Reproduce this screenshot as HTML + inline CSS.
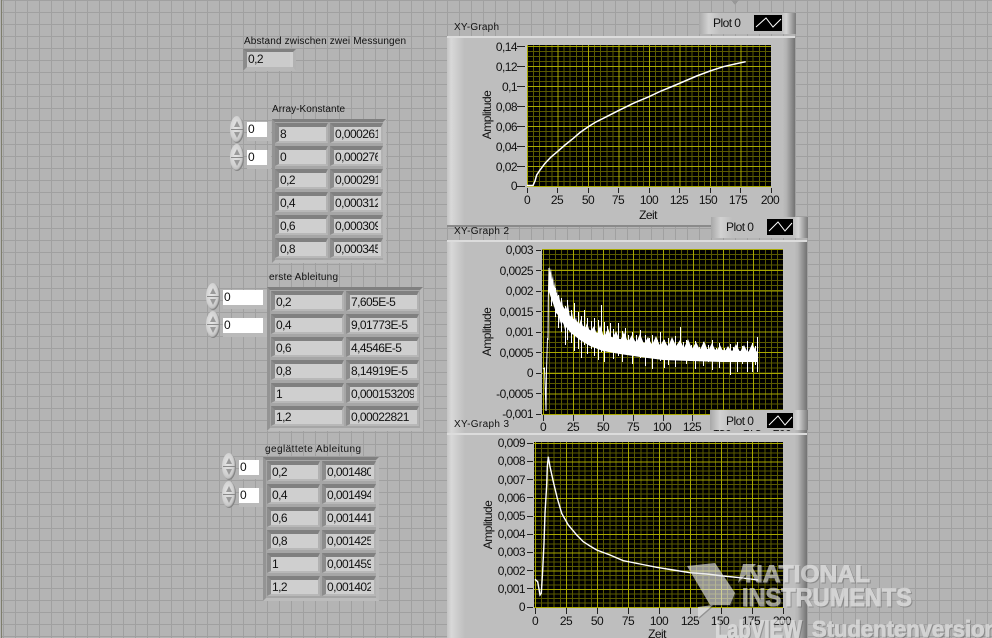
<!DOCTYPE html>
<html><head><meta charset="utf-8"><style>
html,body{margin:0;padding:0;width:992px;height:638px;overflow:hidden;background:#b4b4b4}
body{position:relative;font-family:"Liberation Sans",sans-serif;color:#111}
#bg{position:absolute;left:0;top:0}
.fr{position:absolute;box-sizing:border-box;background:#a6a6a6;border-style:solid;border-width:3px;border-color:#7f7f7f #b8b8b8 #bcbcbc #949494;display:grid;row-gap:3px;column-gap:2px;padding-top:1px;align-content:start}
.c{position:relative;box-sizing:border-box;height:20px;background:#cfcfcf;border-style:solid;border-width:4px 2px 2px 4px;border-color:#808080 #b2b2b2 #b8b8b8 #8c8c8c;font-size:12px;letter-spacing:-.55px;line-height:14px;white-space:nowrap;overflow:hidden;padding-left:1px}
.c:after{content:"";position:absolute;right:0;top:0;bottom:0;width:3px;background:#cfcfcf}
.w{position:absolute;height:15px;background:#fff;font-size:12px;line-height:15px;padding-left:1px;box-sizing:border-box;box-shadow:2px 2px 0 2px #bababa}
.s{position:absolute;width:14px;height:27px;border-radius:50%;background:radial-gradient(ellipse at 40% 40%,#e6e6e6 0,#d0d0d0 50%,#969696 100%);box-shadow:inset -1px -1px 1px #808080}
.s:before{content:"";position:absolute;left:1px;right:1px;top:13px;height:1px;background:#8a8a8a}
.s i{position:absolute;left:4px;width:0;height:0;border-left:3px solid transparent;border-right:3px solid transparent}
.s i.u{top:5px;border-bottom:6px solid #9a9a9a}
.s i.d{bottom:5px;border-top:6px solid #9a9a9a}
svg{position:absolute;left:0;top:0}
svg text{font-family:"Liberation Sans",sans-serif;fill:#111}
.t{font-size:12px;letter-spacing:-.55px}.l{font-size:10px}
.e{text-anchor:end}.m{text-anchor:middle}
</style></head><body>
<svg id="bg" width="992" height="638" shape-rendering="crispEdges">
<rect width="992" height="638" fill="#b4b4b4"/>
<line x1="3" y1="0" x2="992" y2="0" stroke="#a0a0a0" stroke-width="2"/>
<line x1="0" y1="319.5" x2="992" y2="319.5" stroke="#a0a0a0" stroke-width="639" stroke-dasharray="1 11" stroke-dashoffset="-3"/>
<line x1="496" y1="0" x2="496" y2="638" stroke="#a0a0a0" stroke-width="992" stroke-dasharray="1 11"/>
<rect x="0" y="0" width="1" height="638" fill="#b4b4b4"/>
<rect x="1" y="0" width="1" height="638" fill="#7e7e6c"/>
<polygon points="731,0 739,0 735,5" fill="#989898"/>
</svg>

<div class="c" style="position:absolute;left:243px;top:49px;width:53px;height:22px;border-width:3px 3px 4px 4px;background:#cbcbcb;padding-left:1px;line-height:15px">0,2</div>

<div class="fr" style="left:272px;top:119px;width:114px;height:144px;grid-template-columns:53px 53px">
<div class="c">8</div><div class="c">0,000261</div>
<div class="c">0</div><div class="c">0,000276</div>
<div class="c">0,2</div><div class="c">0,000291</div>
<div class="c">0,4</div><div class="c">0,000312</div>
<div class="c">0,6</div><div class="c">0,000309</div>
<div class="c">0,8</div><div class="c">0,000345</div>
</div>
<div class="s" style="left:230px;top:116px"><i class="u"></i><i class="d"></i></div>
<div class="w" style="left:247px;top:122px;width:20px">0</div>
<div class="s" style="left:230px;top:144px"><i class="u"></i><i class="d"></i></div>
<div class="w" style="left:247px;top:150px;width:20px">0</div>

<div class="fr" style="left:267px;top:287px;width:156px;height:144px;padding-left:1px;grid-template-columns:73px 73px">
<div class="c">0,2</div><div class="c">7,605E-5</div>
<div class="c">0,4</div><div class="c">9,01773E-5</div>
<div class="c">0,6</div><div class="c">4,4546E-5</div>
<div class="c">0,8</div><div class="c">8,14919E-5</div>
<div class="c">1</div><div class="c">0,000153209</div>
<div class="c">1,2</div><div class="c">0,00022821</div>
</div>
<div class="s" style="left:206px;top:283px"><i class="u"></i><i class="d"></i></div>
<div class="w" style="left:223px;top:290px;width:40px">0</div>
<div class="s" style="left:206px;top:311px"><i class="u"></i><i class="d"></i></div>
<div class="w" style="left:223px;top:318px;width:40px">0</div>

<div class="fr" style="left:263px;top:457px;width:116px;height:144px;padding-left:1px;grid-template-columns:53px 54px">
<div class="c">0,2</div><div class="c">0,001480</div>
<div class="c">0,4</div><div class="c">0,001494</div>
<div class="c">0,6</div><div class="c">0,001441</div>
<div class="c">0,8</div><div class="c">0,001425</div>
<div class="c">1</div><div class="c">0,001459</div>
<div class="c">1,2</div><div class="c">0,001402</div>
</div>
<div class="s" style="left:222px;top:453px"><i class="u"></i><i class="d"></i></div>
<div class="w" style="left:239px;top:460px;width:20px">0</div>
<div class="s" style="left:222px;top:481px"><i class="u"></i><i class="d"></i></div>
<div class="w" style="left:239px;top:488px;width:20px">0</div>

<svg width="992" height="638">
<defs>
<linearGradient id="p1" gradientUnits="userSpaceOnUse" x1="447" x2="795" y1="0" y2="0">
<stop offset="0" stop-color="#c4c4c4"/><stop offset=".012" stop-color="#d8d8d8"/><stop offset=".05" stop-color="#bebebe"/><stop offset=".964" stop-color="#bebebe"/><stop offset=".975" stop-color="#b4b4b4"/><stop offset="1" stop-color="#727272"/>
</linearGradient>
<linearGradient id="p2" gradientUnits="userSpaceOnUse" x1="447" x2="807" y1="0" y2="0">
<stop offset="0" stop-color="#c4c4c4"/><stop offset=".012" stop-color="#d8d8d8"/><stop offset=".05" stop-color="#bebebe"/><stop offset=".965" stop-color="#bebebe"/><stop offset=".975" stop-color="#b4b4b4"/><stop offset="1" stop-color="#727272"/>
</linearGradient>
<linearGradient id="lg" x1="0" x2="1" y1="0" y2="0">
<stop offset="0" stop-color="#a8a8a8"/><stop offset=".1" stop-color="#d2d2d2"/><stop offset=".22" stop-color="#bebebe"/><stop offset=".85" stop-color="#bebebe"/><stop offset=".9" stop-color="#d4d4d4"/><stop offset="1" stop-color="#7a7a7a"/>
</linearGradient>
</defs>

<!-- labels -->
<text class="l" x="244" y="44" textLength="162">Abstand zwischen zwei Messungen</text>
<text class="l" x="272" y="112" textLength="73">Array-Konstante</text>
<text class="l" x="269" y="280" textLength="69">erste Ableitung</text>
<text class="l" x="265" y="452" textLength="96">geglättete Ableitung</text>
<text class="l" x="454" y="30" textLength="45">XY-Graph</text>

<!-- Graph 1 -->
<rect x="447" y="36" width="348" height="190" fill="url(#p1)"/>
<rect x="447" y="36" width="348" height="2" fill="#dcdcdc" shape-rendering="crispEdges"/>
<rect x="447" y="225" width="348" height="2" fill="#8a8a8a" shape-rendering="crispEdges"/>
<g shape-rendering="crispEdges">
<rect x="527" y="45" width="244" height="142" fill="#000"/>
<line x1="527" y1="116" x2="771" y2="116" stroke="#5a5a00" stroke-width="142" stroke-dasharray="1 5.1"/>
<line x1="649" y1="187" x2="649" y2="45" stroke="#5a5a00" stroke-width="244" stroke-dasharray="1 4"/>
<line x1="527" y1="116" x2="771" y2="116" stroke="#a8a800" stroke-width="142" stroke-dasharray="1 29.5"/>
<line x1="649" y1="187" x2="649" y2="45" stroke="#a8a800" stroke-width="244" stroke-dasharray="1 19"/>
<path stroke="#222" fill="none" d="M517 46.5H525M517 66.5H525M517 86.5H525M517 106.5H525M517 126.5H525M517 146.5H525M517 166.5H525M517 186.5H525M527.5 188V193M557.5 188V193M588.5 188V193M618.5 188V193M649.5 188V193M679.5 188V193M710.5 188V193M740.5 188V193M771.5 188V193"/>
</g>
<polyline fill="none" stroke="#fff" stroke-width="1.5" points="527,185.5 533,185.5 535,181 536.7,175 540,170 545,163.3 551,157 557.3,151.7 565,145 573.3,138.3 580,132.5 588.3,126.7 595,122.5 603.3,118.3 618.3,110.7 633.3,103.3 649,96.7 661,91 673.3,86 685,81 696.7,76 710,71 723.3,66.7 735,64 745.7,61.7"/>
<g class="t">
<text class="e" x="517" y="51">0,14</text><text class="e" x="517" y="71">0,12</text><text class="e" x="517" y="91">0,1</text><text class="e" x="517" y="111">0,08</text><text class="e" x="517" y="131">0,06</text><text class="e" x="517" y="151">0,04</text><text class="e" x="517" y="171">0,02</text><text class="e" x="517" y="190">0</text>
<text class="m" x="527" y="204">0</text><text class="m" x="557" y="204">25</text><text class="m" x="588" y="204">50</text><text class="m" x="618" y="204">75</text><text class="m" x="649" y="204">100</text><text class="m" x="679" y="204">125</text><text class="m" x="708" y="204">150</text><text class="m" x="738" y="204">175</text><text class="m" x="770" y="204">200</text>
<text class="m" x="648" y="219">Zeit</text>
<text class="m" transform="translate(491,115) rotate(-90)">Amplitude</text>
</g>
<rect x="699" y="13" width="97" height="21" fill="url(#lg)"/>
<rect x="754" y="15" width="28" height="16" fill="#000" shape-rendering="crispEdges"/>
<polyline points="756,27 766,18 773,27 781,19" fill="none" stroke="#fff"/>
<text class="t" x="713" y="27">Plot 0</text>

<!-- Graph 2 -->
<text class="l" x="454" y="234" textLength="55">XY-Graph 2</text>
<rect x="447" y="240" width="360" height="195" fill="url(#p2)"/>
<rect x="447" y="240" width="360" height="2" fill="#dcdcdc" shape-rendering="crispEdges"/>
<g shape-rendering="crispEdges">
<rect x="542" y="249" width="241" height="166" fill="#000"/>
<line x1="543" y1="332" x2="783" y2="332" stroke="#5a5a00" stroke-width="166" stroke-dasharray="1 5"/>
<line x1="662.5" y1="415" x2="662.5" y2="249" stroke="#5a5a00" stroke-width="241" stroke-dasharray="1 4.16"/>
<line x1="543" y1="332" x2="783" y2="332" stroke="#a8a800" stroke-width="166" stroke-dasharray="1 29"/>
<line x1="662.5" y1="415" x2="662.5" y2="249" stroke="#a8a800" stroke-width="241" stroke-dasharray="1 19.6"/>
<path stroke="#222" fill="none" d="M536 250.5H541M536 270.5H541M536 291.5H541M536 311.5H541M536 332.5H541M536 352.5H541M536 373.5H541M536 393.5H541M536 414.5H541M543.5 415V421M573.5 415V421M603.5 415V421M633.5 415V421M663.5 415V421M692.5 415V421"/>
</g>
<polyline fill="none" stroke="#fff" points="543,369 544.5,368 545,381 546,411 546.5,370 547.5,338 548,340 548.3,300 549,268"/>
<polygon fill="#fff" points="549,272 556,292 562,305 570,316 580,324 590,330 603,335 620,339 640,342 663,345 690,348 722,350 757,352 757,362 722,362 690,361 663,360 640,357 620,354 603,351 590,346 580,340 570,332 562,322 556,312 549,292"/>
<polygon fill="#fff" points="548.5,270 549.5,267 550,273 551,268 552,280 553,275 554,288 555,281 556,298 557,288 558,303 559,295 561,308 562,300 564,314 566,309 568,304 570,318 572,312 574,324 576,317 578,328 581,319 584,331 587,323 590,332 594,326 597,335 600,325 604,337 608,328 612,339 616,331 620,341 624,332 628,342 632,335 636,343 640,334 644,344 648,337 652,345 656,336 660,346 664,339 668,347 672,337 676,346 680,340 684,348 688,339 692,349 696,342 700,350 704,341 708,351 712,343 716,352 720,345 724,353 728,346 732,352 736,344 740,352 744,345 748,353 752,344 757,352 757,360 752,358 748,362 744,356 740,361 736,355 732,360 728,354 724,359 720,352 716,358 712,351 708,357 704,350 700,356 696,349 692,355 688,348 684,356 680,348 676,354 672,346 668,353 664,346 660,352 656,344 652,351 648,344 644,351 640,343 636,349 632,341 628,350 624,340 620,347 616,338 612,346 608,336 604,345 600,335 596,344 592,333 588,342 584,328 580,339 576,325 572,335 568,322 565,330 562,318 560,324 558,311 556,314 554,304 552,299 550,290 548.5,286"/>
<path fill="none" stroke="#fff" d="M551.5 280V306M555.5 288V317M558.5 295V328M561.5 298V332M565.5 306V345M567.5 300V340M571.5 310V343M574.5 303V351M578.5 312V349M581.5 316V358M584.5 310V345M587.5 318V354M591.5 321V349M594.5 318V356M598.5 320V360M601.5 305V352M604.5 322V362M607.5 326V346M610.5 323V350M613.5 329V359M618.5 323V356M622.5 331V362M625.5 328V353M628.5 335V350M632.5 332V364M636.5 335V350M640.5 330V358M645.5 335V366M649.5 338V354M652.5 335V369M657.5 340V352M660.5 332V361M664.5 340V368M668.5 338V365M672.5 340V356M675.5 336V367M680.5 327V350M683.5 342V359M686.5 340V364M691.5 345V360M695.5 341V369M699.5 347V359M703.5 342V366M708.5 345V362M712.5 340V370M716.5 348V360M719.5 343V368M724.5 348V362M730.5 344V375M733.5 347V362M737.5 342V372M742.5 346V364M747.5 341V372M752.5 343V372M755.5 346V365M757.5 337V372"/>
<g class="t">
<text class="e" x="533" y="254">0,003</text><text class="e" x="533" y="275">0,0025</text><text class="e" x="533" y="295">0,002</text><text class="e" x="533" y="316">0,0015</text><text class="e" x="533" y="336">0,001</text><text class="e" x="533" y="357">0,0005</text><text class="e" x="533" y="377">0</text><text class="e" x="533" y="398">-0,0005</text><text class="e" x="533" y="418">-0,001</text>
<text class="m" x="543" y="431">0</text><text class="m" x="573" y="431">25</text><text class="m" x="603" y="431">50</text><text class="m" x="633" y="431">75</text><text class="m" x="662" y="431">100</text><text class="m" x="692" y="431">125</text><text class="m" x="722" y="431">150</text><text class="m" x="752" y="431">175</text><text class="m" x="782" y="431">200</text>
<text class="m" transform="translate(491,332) rotate(-90)">Amplitude</text>
</g>

<!-- Graph 3 -->
<rect x="447" y="433" width="360" height="205" fill="url(#p2)"/>
<rect x="447" y="433" width="360" height="2" fill="#dcdcdc" shape-rendering="crispEdges"/>
<text class="l" x="454" y="427" textLength="55">XY-Graph 3</text>
<g shape-rendering="crispEdges">
<rect x="534" y="442" width="249" height="166" fill="#000"/>
<line x1="535" y1="525" x2="783" y2="525" stroke="#5a5a00" stroke-width="166" stroke-dasharray="1 5.2"/>
<line x1="658.5" y1="608" x2="658.5" y2="442" stroke="#5a5a00" stroke-width="249" stroke-dasharray="1 3.55"/>
<line x1="535" y1="525" x2="783" y2="525" stroke="#a8a800" stroke-width="166" stroke-dasharray="1 30"/>
<line x1="658.5" y1="608" x2="658.5" y2="442" stroke="#a8a800" stroke-width="249" stroke-dasharray="1 17.2"/>
<path stroke="#222" fill="none" d="M527 443.5H533M527 461.5H533M527 479.5H533M527 497.5H533M527 516.5H533M527 534.5H533M527 552.5H533M527 570.5H533M527 588.5H533M527 607.5H533M535.5 608V614M566.5 608V614M597.5 608V614M628.5 608V614M659.5 608V614M690.5 608V614M721.5 608V614M752.5 608V614M783.5 608V614"/>
</g>
<polyline fill="none" stroke="#fff" stroke-width="1.4" points="535,579.3 537.7,581.7 540,595 541.3,593.3 542.7,570 544,543.3 545,513.3 546.7,485 547.3,466.7 548.3,456.7 550,466.7 553.3,481.7 557.3,498.3 561.7,513.3 568.3,525 576.7,535 583.3,541.7 590,546 596.7,550 610,555 623.3,560.7 640,564 656.7,567.3 673.3,570 690,572.7 706.7,574 723.3,576 740,577.7 758.3,580"/>
<g class="t">
<text class="e" x="525" y="447">0,009</text><text class="e" x="525" y="465">0,008</text><text class="e" x="525" y="484">0,007</text><text class="e" x="525" y="502">0,006</text><text class="e" x="525" y="520">0,005</text><text class="e" x="525" y="538">0,004</text><text class="e" x="525" y="556">0,003</text><text class="e" x="525" y="575">0,002</text><text class="e" x="525" y="593">0,001</text><text class="e" x="525" y="611">0</text>
<text class="m" x="535" y="625">0</text><text class="m" x="566" y="625">25</text><text class="m" x="597" y="625">50</text><text class="m" x="628" y="625">75</text><text class="m" x="659" y="625">100</text><text class="m" x="690" y="625">125</text><text class="m" x="720" y="625">150</text><text class="m" x="751" y="625">175</text><text class="m" x="782" y="625">200</text>
<text class="m" x="657" y="638">Zeit</text>
<text class="m" transform="translate(492,525) rotate(-90)">Amplitude</text>
</g>

<!-- legends 2, 3 -->
<rect x="711" y="217" width="97" height="21" fill="url(#lg)"/>
<rect x="767" y="219" width="26" height="16" fill="#000" shape-rendering="crispEdges"/>
<polyline points="769,231 778,222 785,231 792,223" fill="none" stroke="#fff"/>
<text class="t" x="726" y="231">Plot 0</text>
<rect x="710" y="410" width="98" height="20" fill="url(#lg)"/>
<rect x="767" y="413" width="26" height="15" fill="#000" shape-rendering="crispEdges"/>
<polyline points="769,425 778,416 785,425 792,417" fill="none" stroke="#fff"/>
<text class="t" x="726" y="425">Plot 0</text>

<!-- watermark -->
<g opacity=".65" fill="#e4e4e4" style="filter:drop-shadow(1px 1px 0 rgba(80,80,80,.6))">
<polygon points="687,566 715,563 735,593 730,605 710,605 697,583"/>
<polygon points="698,607 698,618 713,605"/>
<polygon points="743,564 756,564 738,583"/>
<text x="745" y="582" textLength="125" lengthAdjust="spacingAndGlyphs" stroke="#e4e4e4" stroke-width=".9" style="font-size:24px;font-weight:bold;fill:#e4e4e4">NATIONAL</text>
<text x="742" y="606" textLength="170" lengthAdjust="spacingAndGlyphs" stroke="#e4e4e4" stroke-width=".9" style="font-size:25px;font-weight:bold;fill:#e4e4e4">INSTRUMENTS</text>
<text x="715" y="638" textLength="87" lengthAdjust="spacingAndGlyphs" stroke="#e4e4e4" stroke-width=".9" style="font-size:25px;font-weight:bold;fill:#e4e4e4">LabVIEW</text>
<text x="812" y="637" textLength="186" lengthAdjust="spacingAndGlyphs" stroke="#e4e4e4" stroke-width=".9" style="font-size:23px;font-weight:bold;fill:#e4e4e4">Studentenversion</text>
</g>
</svg>
</body></html>
